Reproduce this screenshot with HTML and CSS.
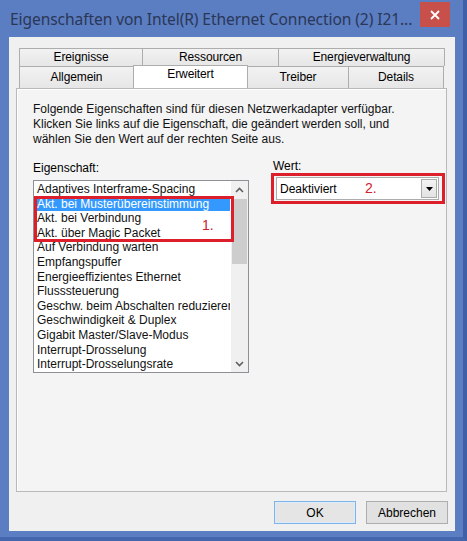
FILE: index.html
```html
<!DOCTYPE html>
<html lang="de">
<head>
<meta charset="utf-8">
<title>Eigenschaften</title>
<link rel="stylesheet" href="styles.css">
</head>
<body>
<div class="window">
  <div class="titlebar">
    <div class="title">Eigenschaften von Intel(R) Ethernet Connection (2) I21...</div>
    <div class="close">
      <svg width="10" height="10" viewBox="0 0 10 10"><path d="M1 1 L9 9 M9 1 L1 9" stroke="#fff" stroke-width="1.8" fill="none"/></svg>
    </div>
  </div>
  <div class="client">
    <div class="tabs">
      <div class="tabrow row1">
        <div class="tab w-ereig">Ereignisse</div>
        <div class="tab w-ress">Ressourcen</div>
        <div class="tab w-energie">Energieverwaltung</div>
      </div>
      <div class="tabrow row2">
        <div class="tab w-allg">Allgemein</div>
        <div class="tab w-erw active">Erweitert</div>
        <div class="tab w-treib">Treiber</div>
        <div class="tab w-det">Details</div>
      </div>
    </div>
    <div class="panel">
      <p class="desc">Folgende Eigenschaften sind für diesen Netzwerkadapter verfügbar.<br>Klicken Sie links auf die Eigenschaft, die geändert werden soll, und<br>wählen Sie den Wert auf der rechten Seite aus.</p>
      <div class="fields">
        <div class="col-left">
          <div class="label label-left">Eigenschaft:</div>
          <div class="listwrap">
            <div class="listbox">
              <ul class="items">
                <li>Adaptives Interframe-Spacing</li>
                <li class="selected">Akt. bei Musterübereinstimmung</li>
                <li>Akt. bei Verbindung</li>
                <li>Akt. über Magic Packet</li>
                <li>Auf Verbindung warten</li>
                <li>Empfangspuffer</li>
                <li>Energieeffizientes Ethernet</li>
                <li>Flusssteuerung</li>
                <li>Geschw. beim Abschalten reduzieren</li>
                <li>Geschwindigkeit &amp; Duplex</li>
                <li>Gigabit Master/Slave-Modus</li>
                <li>Interrupt-Drosselung</li>
                <li>Interrupt-Drosselungsrate</li>
              </ul>
              <div class="scrollbar">
                <div class="arrow">
                  <svg width="9" height="6" viewBox="0 0 9 6"><path d="M1 5 L4.5 1.5 L8 5" stroke="#606060" stroke-width="1.6" fill="none"/></svg>
                </div>
                <div class="track"><div class="thumb"></div></div>
                <div class="arrow">
                  <svg width="9" height="6" viewBox="0 0 9 6"><path d="M1 1 L4.5 4.5 L8 1" stroke="#606060" stroke-width="1.6" fill="none"/></svg>
                </div>
              </div>
            </div>
            <div class="mark mark1"><span class="marknum">1.</span></div>
          </div>
        </div>
        <div class="col-right">
          <div class="label label-right">Wert:</div>
          <div class="mark2">
            <div class="combo">
              <span class="combo-text">Deaktiviert</span>
              <span class="marknum num2">2.</span>
              <div class="dd">
                <svg width="7" height="4" viewBox="0 0 7 4"><path d="M0 0 L7 0 L3.5 4 Z" fill="#000"/></svg>
              </div>
            </div>
          </div>
        </div>
      </div>
    </div>
    <div class="buttons">
      <button class="btn default">OK</button>
      <button class="btn">Abbrechen</button>
    </div>
  </div>
</div>
</body>
</html>
```

FILE: styles.css
```css
* { box-sizing: border-box; }
html, body { margin: 0; padding: 0; }
body {
  width: 467px;
  height: 541px;
  overflow: hidden;
  background: #3b5a9e;
  font-family: "Liberation Sans", Arial, sans-serif;
}
.window {
  width: 467px;
  height: 541px;
  background: #5b7dc2;
  padding: 0 8px 6px 9px;
  border-right: 4px solid #3f5fa6;
  border-bottom: 4px solid #4466ac;
  display: flex;
  flex-direction: column;
}
.titlebar {
  height: 37px;
  display: flex;
  justify-content: space-between;
  align-items: flex-start;
  flex-shrink: 0;
}
.title {
  font-family: "Noto Sans", "Open Sans", sans-serif;
  font-size: 15.6px;
  color: #2a3756;
  margin-top: 8px;
  margin-left: 1px;
  white-space: nowrap;
  letter-spacing: -0.1px;
}
.close {
  width: 30px;
  height: 25px;
  margin-top: 2px;
  margin-right: 5px;
  background: #c8504b;
  display: flex;
  align-items: center;
  justify-content: center;
}
.client {
  flex: 1;
  background: #f0f0f0;
  padding-top: 11px;
  display: flex;
  flex-direction: column;
  font-size: 12px;
  color: #000;
}
.tabs {
  margin-left: 10px;
  width: 426px;
  position: relative;
  z-index: 1;
}
.tabrow {
  display: flex;
}
.tab {
  border: 1px solid #adadad;
  border-bottom: none;
  margin-right: -1px;
  background: linear-gradient(#f2f2f2, #e6e6e6);
  text-align: center;
  font-size: 12px;
  letter-spacing: -0.1px;
  color: #000;
}
.row1 .tab { height: 18px; line-height: 16px; }
.row2 .tab { height: 22px; line-height: 20px; }
.w-ereig { width: 124px; }
.w-ress { width: 137px; }
.w-energie { width: 167px; }
.w-allg { width: 115px; }
.w-erw { width: 115px; }
.w-treib { width: 102px; }
.w-det { width: 96px; }
.tab.active {
  background: #ffffff;
  height: 23px;
  line-height: 17px;
  margin-top: -1px;
  margin-bottom: -2px;
  position: relative;
}
.panel {
  margin: 0 8px 0 7px;
  height: 404px;
  border: 1px solid #b9b9b9;
  background: #f4f4f4;
  box-shadow: inset 1px 1px 0 #ffffff;
  padding: 13px 0 0 16px;
  flex-shrink: 0;
}
.desc {
  margin: 0;
  font-size: 12px;
  line-height: 15px;
  color: #111;
}
.fields {
  display: flex;
  gap: 22px;
  margin-top: 15px;
}
.col-left { width: 216px; }
.col-right { width: 174px; }
.label {
  font-size: 12px;
  line-height: 13px;
}
.label-left { margin-bottom: 5px; }
.label-right { margin-left: 2px; margin-top: -2px; margin-bottom: 0; }
.listwrap { position: relative; }
.listbox {
  height: 193px;
  border: 1px solid #8e9095;
  background: #ffffff;
  display: flex;
}
.items {
  list-style: none;
  margin: 0;
  padding: 1px 1px 0 1px;
  flex: 1;
  overflow: hidden;
}
.items li {
  height: 14.6px;
  line-height: 14.6px;
  padding-left: 2px;
  white-space: nowrap;
  overflow: hidden;
  font-size: 12px;
  color: #111;
}
.items li.selected {
  background: #3399ff;
  color: #ffffff;
}
.scrollbar {
  width: 17px;
  background: #f0f0f0;
  display: flex;
  flex-direction: column;
}
.arrow {
  height: 17px;
  display: flex;
  align-items: center;
  justify-content: center;
}
.track {
  flex: 1;
  padding: 0 1px;
}
.thumb {
  height: 65px;
  margin-top: 1px;
  background: #cdcdcd;
}
.mark {
  position: absolute;
  border: 3px solid #dc1f2b;
}
.mark1 {
  left: 1px;
  top: 16px;
  width: 200px;
  height: 46px;
}
.marknum {
  color: #d0202c;
  font-family: "Liberation Sans", Arial, sans-serif;
  font-size: 14px;
}
.mark1 .marknum {
  position: absolute;
  left: 165px;
  top: 18px;
}
.mark2 {
  border: 3px solid #dc1f2b;
  padding: 1px 3px 1px 2px;
  margin-top: 0;
}
.combo {
  height: 23px;
  border: 1px solid #acacac;
  background: #ffffff;
  display: flex;
  align-items: center;
  padding-left: 3px;
  position: relative;
}
.combo-text {
  font-size: 12px;
  width: 85px;
}
.num2 { margin-top: -1px; }
.dd {
  margin-left: auto;
  margin-right: 1px;
  width: 16px;
  height: 19px;
  border: 1px solid #acacac;
  background: linear-gradient(#f3f3f3, #e3e3e3);
  display: flex;
  align-items: center;
  justify-content: center;
}
.buttons {
  display: flex;
  justify-content: flex-end;
  gap: 10px;
  margin-top: 9px;
  padding-right: 7px;
}
.btn {
  width: 82px;
  height: 23px;
  border: 1px solid #adadad;
  background: #e1e1e1;
  font-family: "Liberation Sans", Arial, sans-serif;
  font-size: 12px;
  color: #000;
  padding: 0;
}
.btn.default {
  border: 1px solid #7eb4ea;
  background: #e5e5e5;
  box-shadow: inset 0 0 0 1px #dcecfc;
}
```
